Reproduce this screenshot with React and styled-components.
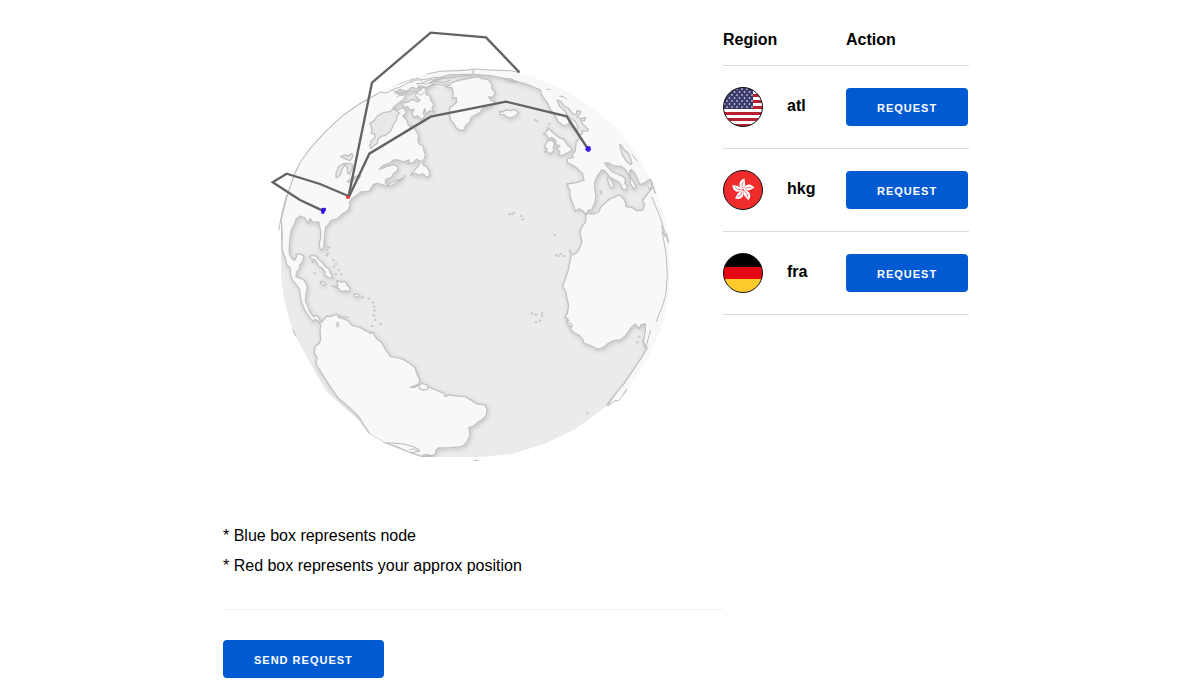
import React from "react";
import styled, { createGlobalStyle } from "styled-components";

const GlobalStyle = createGlobalStyle`
  body {
    margin: 0;
    background: #fff;
    color: #000;
    font-family: "Liberation Sans", Arial, sans-serif;
    font-size: 16px;
  }
`;

const Page = styled.main`
  display: grid;
  grid-template-columns: 500px 246px;
  max-width: 744px;
  margin: 0 auto;
  padding-bottom: 20px;
  align-items: start;
`;

const GlobeDrawing = styled.svg`
  display: block;
  width: 100%;
  aspect-ratio: 1;
`;

const Notes = styled.div`
  padding-top: 21px;
`;

const Note = styled.p`
  margin: 0;
  line-height: 30px;
`;

const Divider = styled.hr`
  margin: 28px 0 30px;
  border: 0;
  border-top: 1px solid #f1f1f1;
`;

const Button = styled.button`
  display: block;
  height: 38px;
  padding: 2px 31px 0;
  border: 0;
  border-radius: 4px;
  background: #005bd3;
  color: #fff;
  font-family: inherit;
  font-size: 11px;
  font-weight: 700;
  line-height: 36px;
  letter-spacing: 1px;
  text-transform: uppercase;
  white-space: nowrap;
  cursor: pointer;
`;

const Table = styled.table`
  width: 100%;
  margin-top: 14px;
  border-collapse: collapse;
  text-align: left;
`;

const HeadCell = styled.th`
  height: 51px;
  box-sizing: border-box;
  padding: 2px 0 0;
  border-bottom: 1px solid #dcdcdc;
`;

const Cell = styled.td`
  width: ${(p) => p.$width}px;
  height: 83px;
  box-sizing: border-box;
  padding: 0;
  border-bottom: 1px solid #dcdcdc;
`;

const RegionName = styled.label`
  display: block;
  padding-bottom: 2px;
  font-weight: 700;
`;

const FlagDrawing = styled.svg`
  display: block;
  width: 40px;
  height: 40px;
`;

const ocean = "#ebebeb";
const land = "#f8f8f8";
const coast = "#c2c2c2";

const landPaths = [
  // the Americas
  `M66 640 L64 600 70 560 80 530 90 500 105 457 125 420 150 385 200 330 250 285 300 250 345 225
   375 205 420 190 455 176 500 150 650 140 700 150 700 168 630 163 570 164 530 175 510 188 520 195
   500 202 480 198 470 206 455 202 440 215
   420 208 405 218 425 226 440 222 430 240 415 250 400 262 412 270 430 262 440 278 428 288 440 300
   444 312 452 322 458 315 468 332 476 345 474 362 478 372 490 378 492 392 497 404 493 416 486 424
   490 436 500 440 509 455 508 468 500 472 488 462 476 466 466 460 452 466 462 452 475 438 482 424
   470 418 460 428 442 430 448 420 430 426 412 420 400 420 388 430 370 436 358 448 380 440 400 434
   412 438 414 450 400 462 394 472 378 478 376 488 384 496 392 488 408 482 430 475 434 466
   428 478 410 488 388 500 378 498 368 494 350 490 340 494 328 514 302 516 290 526 278 534 268 548
   270 558 264 572 245 584 232 596 212 602 204 616 198 620 194 640 193 665 191 682 185 691 180 686
   177 672 182 655 182 632 178 616 176 606 165 608 155 604 152 596 147 600 146 610 140 606 136 594
   120 588 108 598 104 612 94 630 90 655 88 680 88 702 96 716 103 721 110 710 108 703 120 702 132 708
   128 726 120 734 118 748 110 756 108 770 120 774 132 780 142 798 138 826 136 842 144 860 150 876
   160 890 168 886 176 892 184 908 190 900 200 888 212 890 230 882 236 892 250 896 264 902 276 916
   300 922 316 932 340 940 350 956 364 966 375 986 392 1010 410 1012 430 1018 452 1032 466 1044
   470 1060 480 1080 476 1092 450 1102 466 1102 476 1094 490 1102 508 1102 524 1108 532 1112 552 1120
   556 1130 566 1125 600 1129 614 1129 636 1142 652 1152 674 1154 681 1166 680 1184 668 1198 650 1210
   638 1220 627 1222 630 1246 620 1268 605 1280 570 1283 534 1284 526 1294 530 1300 514 1308 496 1304
   482 1308 450 1298 440 1294 420 1284 380 1270 365 1264 330 1243 312 1216 296 1190 270 1164 235 1135
   208 1096 195 1076 170 1036 168 1024 172 1014 163 1000 164 984 168 976 178 970 182 958 180 930
   182 916 176 904 164 898 160 906 154 898 144 886 134 870 124 846 120 822 118 806 98 782 92 766
   90 744 80 734 74 710 66 688 Z`,
  // Baffin Island
  `M470 215 L482 210 490 200 500 210 498 224 510 226 512 240 522 254 516 264 522 276 508 272 500 284
   494 266 490 278 494 290 484 300 474 288 462 292 456 280 462 268 448 270 444 260 428 262 430 248
   446 246 456 238 474 246 480 240 466 228 Z`,
  // Greenland
  `M556 200 L576 204 580 222 576 236 588 232 590 246 582 254 570 262 568 280 572 300 582 312 590 326
   604 332 612 330 618 316 630 306 632 294 644 286 662 276 668 264 690 262 706 246 694 242 686 230
   700 232 706 216 694 204 696 194 684 178 666 176 654 170 630 174 600 180 575 188 570 196 Z`,
  // Iceland
  `M718 274 L730 276 738 270 752 272 764 268 776 278 766 288 750 294 736 290 734 284 722 284 Z`,
  // Great Britain and Ireland
  `M864 322 L874 334 886 344 896 352 912 358 922 374 932 382 936 392 924 398 908 406 892 406 900 396
   890 386 900 378 886 372 888 362 874 352 866 358 860 344 850 342 860 334 Z`,
  `M864 362 L874 360 884 370 880 382 882 392 870 402 860 394 854 396 862 386 852 382 Z`,
  // Africa
  `M977 584 L977 604 962 626 960 642 966 664 960 682 950 698 934 706 928 732 926 746
   916 776 908 798 918 818 922 840 926 858 922 880 914 892 924 896 920 910 928 920 938 916 930 926
   944 940 958 946 968 958 972 970 990 976 1014 988 1028 984 1040 974 1060 962 1080 960 1096 948
   1116 920 1126 912 1138 926 1144 914 1156 912 1156 934 1150 964 1152 978 1160 986 1260 900 1260 540
   1180 500 1148 540 1154 556 1148 570 1130 572 1116 562 1098 560 1096 546 1090 534
   1078 524 1062 532 1050 536 1034 550 1022 562 1016 576 1000 582 986 580 Z`,
  // Eurasia
  `M640 130 L640 163 690 167 740 177 800 193 842 210 844 224 852 236 864 252 872 270 886 288
   894 304 912 318 926 312 928 302 932 318 946 332 956 342 958 356 948 366 946 394 936 404 940 412
   922 416 922 428 938 436 950 444 968 462 972 480 950 488 920 492 930 512 930 530 940 556 946 574
   956 566 968 572 977 584 984 572 996 568 1004 550 1008 530 1005 510 1003 490 1012 468 1026 450
   1034 452 1042 462 1050 472 1062 478 1076 486 1084 496 1086 506 1096 512 1102 500 1094 488 1098 482
   1090 470 1072 462 1058 456 1046 444 1034 430 1044 428 1062 438 1084 440 1098 450 1104 462 1110 476
   1112 492 1122 508 1128 500 1120 484 1110 470 1108 456 1114 448 1124 460 1132 476 1140 494 1152 490
   1166 480 1176 478 1180 490 1184 516 L1260 560 1260 130 Z`,
  // Sardinia and the southern African coast at the limb
  `M1042 474 L1048 472 1056 484 1062 502 1054 504 1046 492 Z`,
  `M1160 986 L1145 1012 1130 1035 1094 1088 1060 1130 1040 1158 1062 1144 1070 1144 1098 1112 1250 1020
   1250 900 Z`,
  // Caribbean
  `M148 710 L156 706 168 708 180 722 188 728 196 740 206 746 212 760 220 774 204 772 192 764 196 758
   186 744 176 738 166 720 154 716 Z`,
  `M230 782 L244 786 256 784 262 796 270 804 268 816 254 812 244 816 236 806 222 800 234 798 Z`,
  `M182 784 L192 786 198 794 190 796 182 790 Z`,
  `M282 822 L292 822 300 828 292 832 282 830 Z`,
  `M476 1096 L486 1090 504 1096 502 1108 488 1110 478 1106 Z`,
];

const waterPaths = [
  // Hudson Bay
  `M330 310 L344 300 352 288 370 278 392 274 400 266 410 272 418 280 410 290 410 300 398 318 392 334
   376 346 362 350 354 358 352 370 340 378 332 386 330 376 334 362 346 352 344 342 334 340 336 326 Z`,
  // the Great Lakes
  `M242 410 L256 404 262 410 276 400 278 410 270 422 260 418 Z`,
  `M228 474 L228 460 236 440 248 432 256 434 248 444 240 466 232 472 Z`,
  `M250 432 L264 430 278 434 276 448 268 464 262 456 262 442 Z`,
  `M262 484 L276 474 284 470 280 482 266 488 Z`,
  `M280 476 L290 468 302 468 296 476 Z`,
  // the Baltic
  `M892 240 L902 244 912 258 926 266 940 284 950 282 950 272 962 274 960 282 950 290 962 296 976 292
   974 302 962 300 968 312 978 322 986 330 978 334 968 332 966 342 956 346 948 332 954 322 946 304
   934 298 922 286 914 272 898 258 Z`,
  // the Black Sea
  `M1078 374 L1084 376 1094 392 1104 398 1112 416 1116 430 1112 434 1098 422 1088 406 Z`,
];

const coastLines = [
  // thin coasts along the limb
  "M345 225 L362 216 380 219 400 208 424 200 440 190 470 180 500 178 520 172 560 175 600 168 640 165",
  "M400 212 L418 220 444 212 460 218 484 208 470 190 500 192 520 184 552 188 572 180",
  "M410 232 L436 216 452 226 464 212 482 226 496 214 506 198 530 192 552 196 568 188",
  "M450 182 L474 174 488 188 512 178 530 182 548 174",
  "M500 162 L540 154 600 152 650 147 690 150 750 152 780 158",
  "M56 632 L62 600 66 580 70 560 80 526",
  "M734 178 L752 176 772 186 750 186 740 182",
  "M860 208 L872 208 M898 228 L910 230 920 238",
  "M1115 402 L1132 424 M1172 476 L1180 500 1186 520 M1164 500 L1170 510 1178 486",
  "M1175 530 L1200 590 1215 640 1226 670 M1206 632 L1218 700 1222 760 1218 820 1210 850 1188 906",
  "M1172 930 L1168 944 1158 980 1148 962",
  "M1204 616 L1214 650 1220 640 1226 666",
  "M1040 1158 L1048 1144 1062 1128 M1044 1158 L1064 1142 1076 1142 1098 1114",
  "M380 1268 L430 1272 460 1280 480 1290 M448 1290 L460 1286 480 1294 450 1298 486 1310 520 1308 500 1304",
  "M98 928 L108 950 M642 1321 L656 1321",
  "M918 900 L930 904 M924 910 L936 912",
  "M230 908 L234 906 236 918 232 922 Z",
];

const isletGroups = [
  [748, 583], [756, 582], [763, 578], [784, 588], [788, 598], [884, 645],
  [888, 706], [896, 708], [902, 702], [912, 708], [930, 692], [932, 698],
  [816, 880], [828, 884], [846, 880], [846, 888], [828, 906], [840, 902],
  [200, 680], [208, 682], [202, 690], [200, 706], [204, 700], [220, 720], [228, 732],
  [222, 740], [236, 750], [228, 762], [244, 764], [164, 760], [158, 726], [218, 798],
  [308, 832], [326, 836], [338, 848], [342, 860], [344, 872], [342, 886], [346, 900],
  [336, 918], [362, 912], [244, 890], [252, 890], [262, 892], [238, 888],
  [330, 940], [340, 938], [826, 300], [832, 304], [868, 312], [864, 328],
  [1138, 950], [1132, 967], [982, 1180], [1022, 514], [1024, 520],
];

const routes = [
  "188,572 120,540 38,487 80,461 180,492 265,528",
  "266,528 336,188 512,38 678,52 778,157",
  "268,528 328,401 512,290 738,245 920,289 982,384",
];

function Globe() {
  return (
    <GlobeDrawing viewBox="-111 -60 1500 1500" role="img" aria-label="Globe with request routes">
      <defs>
        <clipPath id="sphere">
          <path d="M62 729 L62 640 78 540 105 457 150 385 200 330 250 285 300 250 345 225 430 185 500 162 570 149 645 146 A583 583 0 0 1 1228 729 Q1230 850 1200 930 L1155 1030 1100 1112 1040 1158 945 1228 850 1273 755 1302 645 1312 500 1311 440 1296 375 1270 326 1240 290 1195 200 1115 150 1030 98 930 Q62 830 62 729Z" />
        </clipPath>
        <filter id="shore" x="-10%" y="-10%" width="120%" height="120%">
          <feDropShadow dx="3" dy="4" stdDeviation="6" floodColor="#000" floodOpacity="0.16" />
        </filter>
      </defs>
      <g clipPath="url(#sphere)" strokeLinejoin="round">
        <rect x="40" y="120" width="1220" height="1220" fill={ocean} />
        <g fill={land} stroke={coast} strokeWidth="4" filter="url(#shore)">
          {landPaths.map((d) => <path key={d} d={d} />)}
        </g>
        {/* plain land where the African and Eurasian shapes meet beyond the Levant */}
        <path d="M1188 522 L1230 500 1260 560 1260 1000 1164 986 1170 930 1176 560 Z" fill={land} />
        <g fill="#e8e8e8" stroke={coast} strokeWidth="4">
          {waterPaths.map((d) => <path key={d} d={d} />)}
        </g>
        <g fill="#e4e4e4" stroke={coast} strokeWidth="3">
          {isletGroups.map(([x, y]) => <ellipse key={`${x}-${y}`} cx={x} cy={y} rx="3" ry="2" />)}
        </g>
      </g>
      <g fill="none" stroke="#bcbcbc" strokeWidth="3">
        {coastLines.map((d) => <path key={d} d={d} />)}
        <path d="M66 660 L64 600 78 540 90 500 105 457 125 420 150 385 200 330 250 285 300 250 345 225" />
      </g>
      <path d="M259 524 L270 524 270 532 264 536 258 532Z" fill="#f5302a" />
      <g fill="none" stroke="#636363" strokeWidth="7">
        {routes.map((points) => <polyline key={points} points={points} />)}
      </g>
      <path d="M258 528 L270 528 269 535 260 536Z" fill="#f5302a" />
      <path d="M185 564 L198 563 197 572 191 582 184 581 183 572Z" fill="#3718ea" />
      <path d="M979 379 L991 379 993 388 989 395 981 395 976 388Z" fill="#3718ea" />
    </GlobeDrawing>
  );
}

const starRows = [2, 5, 8, 11, 14, 17, 20];

const flagArt = {
  us: (
    <>
      <rect width="40" height="40" fill="#fff" />
      {[1, 7, 13, 19, 25, 31, 37].map((y) => (
        <rect key={y} y={y} width="40" height="3" fill="#b8202f" />
      ))}
      <rect width="30" height="22" fill="#3c3b6e" />
      {starRows.map((y, row) =>
        [4, 9, 14, 19, 24, 29].map((x) => (
          <circle key={`${x}-${y}`} cx={x - (row % 2) * 2.5} cy={y} r="0.8" fill="#fff" />
        ))
      )}
    </>
  ),
  hk: (
    <>
      <rect width="40" height="40" fill="#ee2c2c" />
      {[0, 72, 144, 216, 288].map((turn) => (
        <g key={turn} transform={`rotate(${turn} 20 20)`}>
          <path d="M20 19.5 C15 17 15 10 22 8.5 C20.5 11 24.5 14 20 19.5Z" fill="#fff" />
          <path d="M19.7 18 Q17.8 14 20.4 11.5" fill="none" stroke="#ee2c2c" strokeWidth="0.6" />
        </g>
      ))}
    </>
  ),
  de: (
    <>
      <rect width="40" height="14" fill="#000" />
      <rect y="14" width="40" height="13" fill="#e30613" />
      <rect y="26" width="40" height="14" fill="#ffca2c" />
    </>
  ),
};

function Flag({ country }) {
  return (
    <FlagDrawing viewBox="0 0 40 40" aria-hidden="true">
      <clipPath id={`flag-${country}`}>
        <circle cx="20" cy="20" r="19.5" />
      </clipPath>
      <g clipPath={`url(#flag-${country})`}>{flagArt[country]}</g>
      <circle cx="20" cy="20" r="19.5" fill="none" stroke="#111" />
    </FlagDrawing>
  );
}

const regions = [
  { name: "atl", country: "us" },
  { name: "hkg", country: "hk" },
  { name: "fra", country: "de" },
];

export default function App() {
  return (
    <>
      <GlobalStyle />
      <Page>
        <section>
          <Globe />
          <Notes>
            <Note>* Blue box represents node</Note>
            <Note>* Red box represents your approx position</Note>
          </Notes>
          <Divider />
          <Button type="button">Send request</Button>
        </section>
        <Table>
          <thead>
            <tr>
              <HeadCell colSpan={2}>Region</HeadCell>
              <HeadCell>Action</HeadCell>
            </tr>
          </thead>
          <tbody>
            {regions.map(({ name, country }) => (
              <tr key={name}>
                <Cell $width={64}><Flag country={country} /></Cell>
                <Cell $width={59}>
                  <RegionName htmlFor={`request-${name}`}>{name}</RegionName>
                </Cell>
                <Cell $width={123}>
                  <Button type="button" id={`request-${name}`}>Request</Button>
                </Cell>
              </tr>
            ))}
          </tbody>
        </Table>
      </Page>
    </>
  );
}
